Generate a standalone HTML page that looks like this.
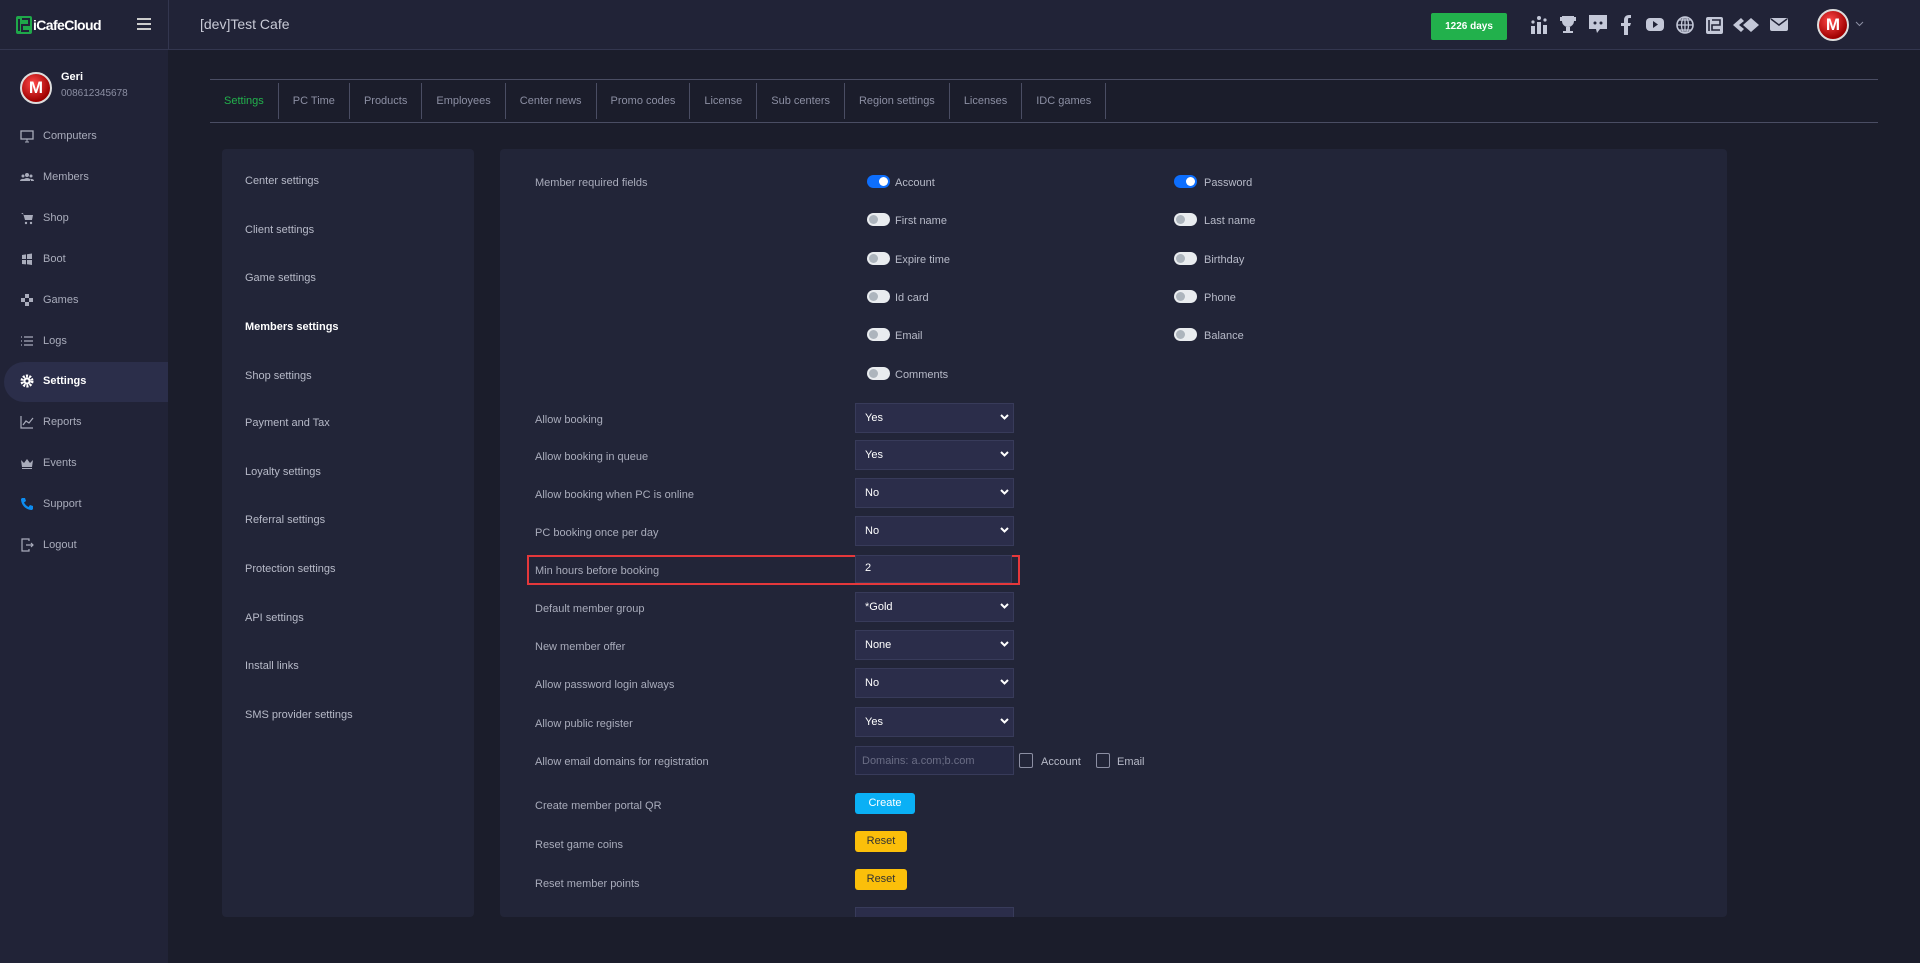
<!DOCTYPE html>
<html><head><meta charset="utf-8">
<style>
*{box-sizing:border-box;margin:0;padding:0}
body{width:1920px;height:963px;overflow:hidden;background:#1b1d2b;font-family:"Liberation Sans",sans-serif;color:#a9acbb;position:relative;font-size:12px}
.abs{position:absolute}
#top{left:0;top:0;width:1920px;height:50px;background:#212337;border-bottom:1px solid #33364f}
#side{left:0;top:50px;width:168px;height:913px;background:#212337}
.vl{left:168px;top:0;width:1px;height:50px;background:#33364f}
.mi{position:absolute;left:20px;font-size:11px;color:#a9acbb;display:flex;align-items:center}
.mi svg{width:14px;height:14px;margin-right:9px}
.tabs{position:absolute;left:210px;top:79px;width:1668px;height:44px;border-top:1px solid #4a4d63;border-bottom:1px solid #4a4d63;display:flex;align-items:center}
.tab{font-size:11px;color:#8c8fa3;padding:0 14px;height:36px;line-height:36px;border-right:1px solid #4a4d63}
.lp{left:222px;top:149px;width:252px;height:768px;background:#222538;border-radius:4px}
.lp div{position:absolute;left:23px;font-size:11px;color:#b7bac8}
.mp{left:500px;top:149px;width:1227px;height:768px;background:#222538;border-radius:4px;overflow:hidden}
.lb{position:absolute;left:35px;font-size:11px;color:#a9acbb}
.tg{position:absolute;width:23px;height:13px;border-radius:7px;background:#e9ecef}
.tg::after{content:"";position:absolute;left:2px;top:2px;width:9px;height:9px;border-radius:50%;background:#adb5bd}
.tg.on{background:#0d6efd}
.tg.on::after{left:12px;background:#fff}
.tl{position:absolute;font-size:11px;color:#b7bac8}
.sel{position:absolute;left:355px;width:159px;height:30px;background:#2b2d4a;border:1px solid #383b5a;color:#fff;font-size:11px;padding-left:9px;line-height:28px}
.sel svg{position:absolute;right:4px;top:10px}
.btn{position:absolute;left:355px;font-size:11px;border-radius:3px;text-align:center}
.cb{position:absolute;width:14px;height:15px;border:1px solid #8c8fa3;border-radius:2px}
</style></head><body>
<div id="top" class="abs">
  <div class="abs" style="left:16px;top:16px;display:flex;align-items:center">
    <svg width="16" height="18" viewBox="0 0 16 18"><rect x="0" y="0" width="16" height="18" rx="2" fill="#1fa84a"/><path d="M3 3v12M6 3h7v6H6v6h7" stroke="#212337" stroke-width="2" fill="none"/></svg>
    <span style="color:#fff;font-size:14px;font-weight:bold;letter-spacing:-0.6px;margin-left:1px">iCafeCloud</span>
  </div>
  <div class="abs" style="left:137px;top:18px;width:14px"><div style="height:2px;background:#ccc;margin-bottom:3px"></div><div style="height:2px;background:#ccc;margin-bottom:3px"></div><div style="height:2px;background:#ccc"></div></div>
  <div class="vl abs"></div>
  <div class="abs" style="left:200px;top:16px;font-size:14px;color:#c8cad6">[dev]Test Cafe</div>
  <div class="abs" style="left:1431px;top:13px;width:76px;height:27px;background:#22b14c;border-radius:2px;color:#fff;font-size:10px;font-weight:bold;text-align:center;line-height:27px">1226 days</div>
  <svg class="abs" style="left:1529px;top:14px" width="270" height="22" viewBox="0 0 270 22" fill="#c4c8d8">
    <g transform="translate(1,0)"><rect x="1" y="12" width="4" height="8"/><rect x="7" y="8" width="4" height="12"/><rect x="13" y="11" width="4" height="9"/><circle cx="9" cy="4" r="2"/><circle cx="3" cy="8" r="1.6"/><circle cx="15" cy="6" r="1.6"/></g>
    <g transform="translate(7,0)"><path d="M26 2h12v5a6 6 0 0 1-12 0zM24 3h2v4h-2zM38 3h2v4h-2zM30 13h4v4h3v2h-10v-2h3z"/></g>
    <g transform="translate(13,0)"><path d="M47 1h18v14h-7l-3 4-1-4h-7z"/><circle cx="53" cy="9" r="1.5" fill="#212337"/><circle cx="59" cy="9" r="1.5" fill="#212337"/></g>
    <g transform="translate(18,0)"><path d="M77 21v-9h-3v-3h3V6c0-3 2-5 5-5h2v3h-2c-1 0-1 1-1 2v3h3l-1 3h-2v9z"/></g>
    <g transform="translate(22,0)"><rect x="95" y="4" width="18" height="13" rx="4"/><path d="M102 7l5 3.5-5 3.5z" fill="#212337"/></g>
    <g transform="translate(28,0)"><circle cx="128" cy="11" r="8" fill="none" stroke="#c4c8d8" stroke-width="1.6"/><path d="M120 11h16M128 3v16M122 6h12M122 16h12" stroke="#c4c8d8" stroke-width="1.3" fill="none"/><ellipse cx="128" cy="11" rx="3.5" ry="8" fill="none" stroke="#c4c8d8" stroke-width="1.3"/></g>
    <g transform="translate(34,0)"><rect x="143" y="3" width="17" height="17" rx="2"/><path d="M146 6v11M149 6h8v5h-8v5h8" stroke="#212337" stroke-width="1.6" fill="none"/></g>
    <g transform="translate(38,0)"><path d="M166 11l8-7 3 3-5 4 5 4-3 3zM176 11l8-7 8 7-8 7zM182 11l2-2 2 2-2 2z"/></g>
    <g transform="translate(45,0)"><rect x="196" y="4" width="18" height="13" rx="2"/><path d="M197 5l8 6 8-6" stroke="#212337" stroke-width="1.5" fill="none"/></g>
  </svg>
  <div class="abs" style="left:1817px;top:9px;width:32px;height:32px;border-radius:50%;background:radial-gradient(circle at 40% 35%,#ff4a4a,#a00000 70%);border:2px solid #ddd;color:#fff;font-weight:bold;font-size:17px;text-align:center;line-height:28px">M</div>
  <svg class="abs" style="left:1855px;top:21px" width="9" height="6"><path d="M1 1l3.5 3.5L8 1" stroke="#8c8fa3" fill="none"/></svg>
</div>
<div id="side" class="abs">
  <div class="abs" style="left:20px;top:22px;width:32px;height:32px;border-radius:50%;background:radial-gradient(circle at 40% 35%,#ff4a4a,#a00000 70%);border:2px solid #ddd;color:#fff;font-weight:bold;font-size:17px;text-align:center;line-height:28px">M</div>
  <div class="abs" style="left:61px;top:21px;color:#fff;font-weight:bold;font-size:11px">Geri</div>
  <div class="abs" style="left:61px;top:38px;color:#8c8fa3;font-size:10px">008612345678</div>
  <div class="abs" style="left:4px;top:312px;width:164px;height:40px;background:#2b2e4a;border-radius:20px 0 0 20px"></div>
</div>
<div class="mi" style="top:129px"><svg viewBox="0 0 14 14"><rect x="1" y="2" width="12" height="8" fill="none" stroke="#a9acbb" stroke-width="1.3"/><path d="M5 13h4M7 10v3" stroke="#a9acbb"/></svg>Computers</div>
<div class="mi" style="top:170px"><svg viewBox="0 0 14 14" fill="#a9acbb"><circle cx="7" cy="5" r="2"/><circle cx="3" cy="6" r="1.5"/><circle cx="11" cy="6" r="1.5"/><path d="M3 11a4 3 0 0 1 8 0zM0 11a3 2 0 0 1 4-2v2zM14 11a3 2 0 0 0-4-2v2z"/></svg>Members</div>
<div class="mi" style="top:211px"><svg viewBox="0 0 14 14" fill="#a9acbb"><path d="M1 2h2l2 7h7l1-5H4"/><circle cx="6" cy="12" r="1.2"/><circle cx="11" cy="12" r="1.2"/></svg>Shop</div>
<div class="mi" style="top:252px"><svg viewBox="0 0 14 14" fill="#a9acbb"><path d="M2 3l4-.6V7H2zM7 2.3l5-.8V7H7zM2 8h4v4.4L2 12zM7 8h5v5l-5-.8z"/></svg>Boot</div>
<div class="mi" style="top:293px"><svg viewBox="0 0 14 14" fill="#a9acbb"><rect x="5" y="1" width="4" height="4"/><rect x="5" y="9" width="4" height="4"/><rect x="1" y="5" width="4" height="4"/><rect x="9" y="5" width="4" height="4"/></svg>Games</div>
<div class="mi" style="top:334px"><svg viewBox="0 0 14 14" stroke="#a9acbb" stroke-width="1.3"><path d="M1 3h1M4 3h9M1 7h1M4 7h9M1 11h1M4 11h9"/></svg>Logs</div>
<div class="mi" style="top:374px;color:#fff;font-weight:bold"><svg viewBox="0 0 14 14"><circle cx="7" cy="7" r="5" fill="none" stroke="#fff" stroke-width="3" stroke-dasharray="2 1.2"/><circle cx="7" cy="7" r="3.5" fill="#fff"/><circle cx="7" cy="7" r="1.5" fill="#2b2e4a"/></svg>Settings</div>
<div class="mi" style="top:415px"><svg viewBox="0 0 14 14" fill="none" stroke="#a9acbb" stroke-width="1.2"><path d="M1 1v12h12M3 10l3-4 3 2 4-5"/></svg>Reports</div>
<div class="mi" style="top:456px"><svg viewBox="0 0 14 14" fill="#a9acbb"><path d="M1 4l3 3 3-4 3 4 3-3-1 7H2zM2 12h10v1H2z"/></svg>Events</div>
<div class="mi" style="top:497px"><svg viewBox="0 0 14 14" fill="#0d8cf0"><path d="M2 1l3 0 1 3-2 1.5c1 2 2.5 3.5 4.5 4.5L10 8l3 1v3l-1 1C6 13 1 8 1 2z"/></svg>Support</div>
<div class="mi" style="top:538px"><svg viewBox="0 0 14 14" fill="none" stroke="#a9acbb" stroke-width="1.2"><path d="M9 3V1H2v12h7v-2M6 7h7M11 5l2 2-2 2"/></svg>Logout</div>

<div class="tabs">
  <div class="tab" style="color:#22b14c;padding-left:14px">Settings</div>
  <div class="tab">PC Time</div>
  <div class="tab">Products</div>
  <div class="tab">Employees</div>
  <div class="tab">Center news</div>
  <div class="tab">Promo codes</div>
  <div class="tab">License</div>
  <div class="tab">Sub centers</div>
  <div class="tab">Region settings</div>
  <div class="tab">Licenses</div>
  <div class="tab">IDC games</div>
</div>

<div class="lp abs">
  <div style="top:26px">Center settings</div>
  <div style="top:75px">Client settings</div>
  <div style="top:123px">Game settings</div>
  <div style="top:172px;color:#fff;font-weight:bold">Members settings</div>
  <div style="top:221px">Shop settings</div>
  <div style="top:268px">Payment and Tax</div>
  <div style="top:317px">Loyalty settings</div>
  <div style="top:365px">Referral settings</div>
  <div style="top:414px">Protection settings</div>
  <div style="top:463px">API settings</div>
  <div style="top:511px">Install links</div>
  <div style="top:560px">SMS provider settings</div>
</div>

<div class="mp abs">
  <div class="lb" style="top:28px">Member required fields</div>
  <div class="tg on" style="left:367px;top:26px"></div><div class="tl" style="left:395px;top:28px">Account</div>
  <div class="tg on" style="left:674px;top:26px"></div><div class="tl" style="left:704px;top:28px">Password</div>
  <div class="tg" style="left:367px;top:64px"></div><div class="tl" style="left:395px;top:66px">First name</div>
  <div class="tg" style="left:674px;top:64px"></div><div class="tl" style="left:704px;top:66px">Last name</div>
  <div class="tg" style="left:367px;top:103px"></div><div class="tl" style="left:395px;top:105px">Expire time</div>
  <div class="tg" style="left:674px;top:103px"></div><div class="tl" style="left:704px;top:105px">Birthday</div>
  <div class="tg" style="left:367px;top:141px"></div><div class="tl" style="left:395px;top:143px">Id card</div>
  <div class="tg" style="left:674px;top:141px"></div><div class="tl" style="left:704px;top:143px">Phone</div>
  <div class="tg" style="left:367px;top:179px"></div><div class="tl" style="left:395px;top:181px">Email</div>
  <div class="tg" style="left:674px;top:179px"></div><div class="tl" style="left:704px;top:181px">Balance</div>
  <div class="tg" style="left:367px;top:218px"></div><div class="tl" style="left:395px;top:220px">Comments</div>

  <div class="lb" style="top:265px">Allow booking</div>
  <div class="sel" style="top:254px">Yes<svg width="9" height="7"><path d="M1 1l3.5 3.5L8 1" stroke="#fff" stroke-width="2" fill="none"/></svg></div>
  <div class="lb" style="top:302px">Allow booking in queue</div>
  <div class="sel" style="top:291px">Yes<svg width="9" height="7"><path d="M1 1l3.5 3.5L8 1" stroke="#fff" stroke-width="2" fill="none"/></svg></div>
  <div class="lb" style="top:340px">Allow booking when PC is online</div>
  <div class="sel" style="top:329px">No<svg width="9" height="7"><path d="M1 1l3.5 3.5L8 1" stroke="#fff" stroke-width="2" fill="none"/></svg></div>
  <div class="lb" style="top:378px">PC booking once per day</div>
  <div class="sel" style="top:367px">No<svg width="9" height="7"><path d="M1 1l3.5 3.5L8 1" stroke="#fff" stroke-width="2" fill="none"/></svg></div>
  <div class="abs" style="left:27px;top:406px;width:493px;height:30px;border:2px solid #e5383b"></div>
  <div class="lb" style="top:416px">Min hours before booking</div>
  <div class="sel" style="top:406px;left:355px;width:157px;height:28px;line-height:24px">2</div>
  <div class="lb" style="top:454px">Default member group</div>
  <div class="sel" style="top:443px">*Gold<svg width="9" height="7"><path d="M1 1l3.5 3.5L8 1" stroke="#fff" stroke-width="2" fill="none"/></svg></div>
  <div class="lb" style="top:492px">New member offer</div>
  <div class="sel" style="top:481px">None<svg width="9" height="7"><path d="M1 1l3.5 3.5L8 1" stroke="#fff" stroke-width="2" fill="none"/></svg></div>
  <div class="lb" style="top:530px">Allow password login always</div>
  <div class="sel" style="top:519px">No<svg width="9" height="7"><path d="M1 1l3.5 3.5L8 1" stroke="#fff" stroke-width="2" fill="none"/></svg></div>
  <div class="lb" style="top:569px">Allow public register</div>
  <div class="sel" style="top:558px">Yes<svg width="9" height="7"><path d="M1 1l3.5 3.5L8 1" stroke="#fff" stroke-width="2" fill="none"/></svg></div>
  <div class="lb" style="top:607px">Allow email domains for registration</div>
  <div class="sel" style="top:597px;height:29px;color:#6a6d85;padding-left:6px;background:#262944">Domains: a.com;b.com</div>
  <div class="cb" style="left:519px;top:604px"></div><div class="tl" style="left:541px;top:607px">Account</div>
  <div class="cb" style="left:596px;top:604px"></div><div class="tl" style="left:617px;top:607px">Email</div>
  <div class="lb" style="top:651px">Create member portal QR</div>
  <div class="btn" style="top:644px;width:60px;height:21px;line-height:21px;background:#0ab0f5;color:#fff">Create</div>
  <div class="lb" style="top:690px">Reset game coins</div>
  <div class="btn" style="top:682px;width:52px;height:21px;line-height:21px;background:#fbbf0a;color:#333">Reset</div>
  <div class="lb" style="top:729px">Reset member points</div>
  <div class="btn" style="top:720px;width:52px;height:21px;line-height:21px;background:#fbbf0a;color:#333">Reset</div>
  <div class="sel" style="top:758px">Yes</div>
</div>
</body></html>
